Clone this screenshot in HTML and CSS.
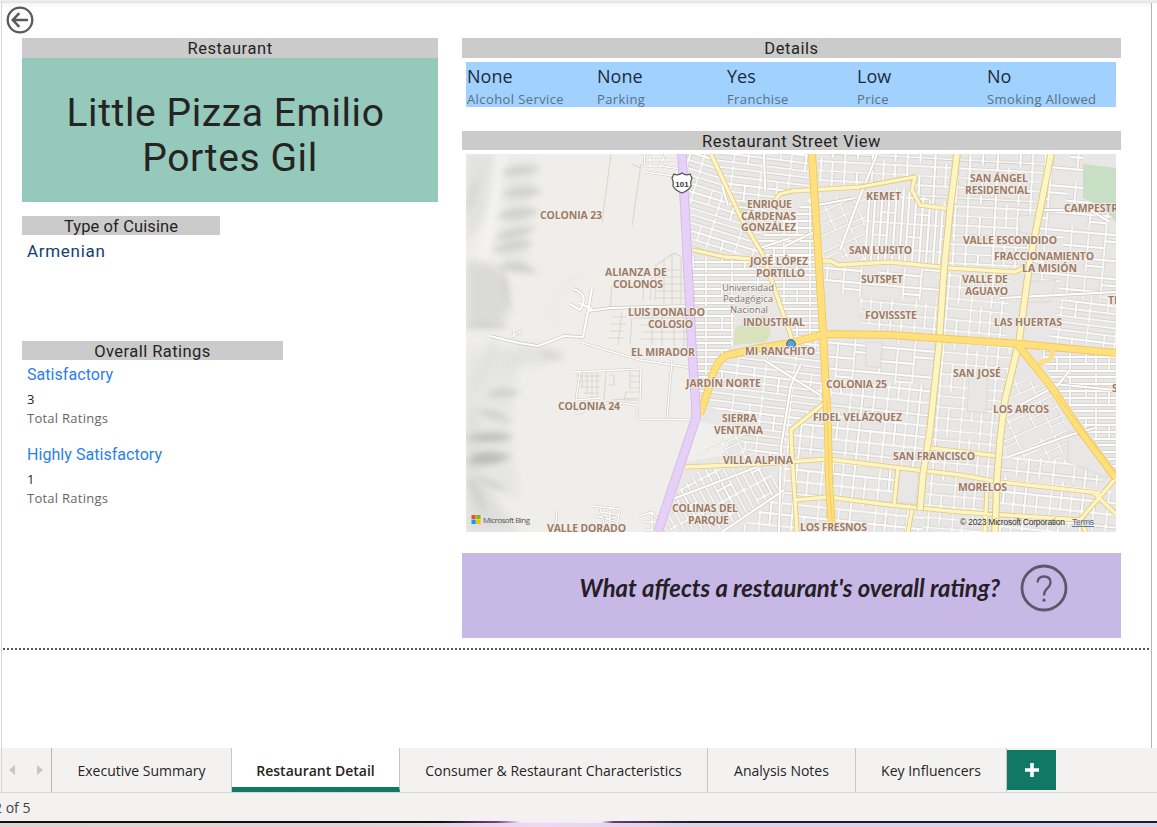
FILE: index.html
```html
<!DOCTYPE html>
<html lang="en">
<head>
<meta charset="utf-8">
<title>Restaurant Detail</title>
<link rel="stylesheet" href="styles.css">
</head>
<body>
<div class="app">
  <div class="ribbon-edge"></div>
  <main class="canvas">
    <button class="back" aria-label="Back">
      <svg width="28" height="28" viewBox="0 0 28 28" fill="none" stroke="#5c5a59" stroke-width="2.3"><circle cx="14" cy="14" r="12.3"/><path d="M22 14H7M13.3 7.2L6.8 14l6.5 6.8" stroke-width="2.5"/></svg>
    </button>
    <div class="report">
      <section class="left">
        <h2 class="bar">Restaurant</h2>
        <div class="name-card"><div class="name-first">Little Pizza Emilio</div><div>Portes Gil</div></div>
        <h2 class="bar bar-cuisine">Type of Cuisine</h2>
        <div class="cuisine">Armenian</div>
        <h2 class="bar bar-ratings">Overall Ratings</h2>
        <div class="rating"><div class="rating-name">Satisfactory</div><div class="rating-value">3</div><div class="rating-label">Total Ratings</div></div>
        <div class="rating"><div class="rating-name">Highly Satisfactory</div><div class="rating-value">1</div><div class="rating-label">Total Ratings</div></div>
      </section>
      <section class="right">
        <h2 class="bar">Details</h2>
        <div class="details">
          <div class="fact"><b>None</b><span>Alcohol Service</span></div>
          <div class="fact"><b>None</b><span>Parking</span></div>
          <div class="fact"><b>Yes</b><span>Franchise</span></div>
          <div class="fact"><b>Low</b><span>Price</span></div>
          <div class="fact"><b>No</b><span>Smoking Allowed</span></div>
        </div>
        <h2 class="bar bar-map">Restaurant Street View</h2>
        <svg class="map" width="650" height="378" viewBox="466 154 650 378">
          <defs>
            <filter id="soft" x="-50%" y="-50%" width="200%" height="200%"><feGaussianBlur stdDeviation="5"/></filter>
            <filter id="soft2" x="-50%" y="-80%" width="200%" height="260%"><feGaussianBlur stdDeviation="3"/></filter>
            <path id="rowsTile" d="M0 3H52M0 10H52M0 17H52M0 24H52M0 31H52M4 0V31M30 3V34M46 10V24M17 17V31"/>
            <path id="gridTile" d="M0 4H50M0 14H50M0 24H50M0 35H50M4 0V40M13 0V24M22 4V40M32 0V40M42 14V40"/>
            <path id="wideTile" d="M0 5H60M0 19H42M0 31H60M8 0V31M25 5V44M42 0V44M42 12H60M25 38H42"/>
            <pattern id="rows" width="52" height="34" patternUnits="userSpaceOnUse"><use href="#rowsTile" class="st-edge"/><use href="#rowsTile" class="st"/></pattern>
            <pattern id="rows20" href="#rows" patternTransform="rotate(17) scale(1.1)"/>
            <pattern id="rows8" href="#rows" patternTransform="rotate(7) scale(1.1)"/>
            <pattern id="rowsTilt" href="#rows" patternTransform="rotate(62) scale(1.15)"/>
            <pattern id="rowsV" href="#rows" patternTransform="rotate(94)"/>
            <pattern id="grid" width="50" height="40" patternUnits="userSpaceOnUse" patternTransform="rotate(5) scale(1.1)"><use href="#gridTile" class="st-edge"/><use href="#gridTile" class="st"/></pattern>
            <pattern id="gridS" href="#grid" patternTransform="rotate(6) scale(1.15)"/>
            <pattern id="gridN" href="#grid" patternTransform="rotate(3) scale(1.25 .95)"/>
            <pattern id="wide" width="60" height="44" patternUnits="userSpaceOnUse" patternTransform="rotate(5)"><use href="#wideTile" class="st-edge"/><use href="#wideTile" class="st"/></pattern>
            <pattern id="wideTilt" href="#wide" patternTransform="rotate(-24) scale(.85)"/>
          </defs>
          <rect x="466" y="154" width="650" height="378" fill="#efeeeb"/>

          <!-- hill shading -->
          <g filter="url(#soft)">
            <path d="M466 154H498L490 210 466 245Z" fill="#e1e1df"/>
            <path d="M505 160H535L525 275 500 262Z M466 350H520L510 430 520 500 466 480Z" fill="#e6e6e4"/>
            <path d="M466 262Q500 255 508 290Q512 318 498 326L466 328Z" fill="#dadad8"/>
            <path d="M484 262L500 154" stroke="#f6f6f5" stroke-width="8"/>
            <path d="M466 395Q485 420 478 460Q490 500 520 532H466Z" fill="#dededc"/>
            <path d="M500 350Q530 340 565 352L545 365Q520 362 500 380Z" fill="#e2e2e0"/>
            <path d="M555 330Q546 296 580 272" stroke="#e9e9e6" stroke-width="5" fill="none"/>
            <path d="M470 390Q500 350 490 344" stroke="#e0e0de" stroke-width="10" fill="none"/>
          </g>
          <g filter="url(#soft2)" fill="#d0d0ce">
            <path d="M504 173Q520 164 537 169Q522 175 504 173Z M505 194Q522 184 539 191Q522 198 505 194Z M500 216Q518 206 536 212Q520 220 500 216Z M497 238Q512 228 532 229Q516 238 497 238Z M494 250Q512 240 530 243Q514 252 494 250Z M500 268Q518 258 534 272Q516 270 500 268Z" stroke="#d0d0ce" stroke-width="3"/>
            <path d="M468 438Q490 430 510 437Q490 444 468 438Z M468 462Q480 446 508 457Q488 468 468 462Z" fill="#bcbcba" stroke="#c4c4c2" stroke-width="3"/>
            <path d="M488 394Q503 386 518 393Q504 399 488 394Z M478 412Q495 408 509 421Q492 418 478 412Z M478 479Q494 479 505 490Q490 486 478 479Z" stroke="#d0d0ce" stroke-width="2"/>
            <path d="M538 353Q552 350 566 358Q550 362 538 353Z" fill="#d6d6d4"/>
            <ellipse cx="477" cy="495" rx="4" ry="20" transform="rotate(-25 477 495)"/><ellipse cx="505" cy="290" rx="2.500" ry="20" transform="rotate(-10 505 290)"/>
            <ellipse cx="472" cy="196" rx="4" ry="18" fill="#d8d8d6" transform="rotate(18 472 196)"/><ellipse cx="486" cy="325" rx="22" ry="3"/>
          </g>

          <!-- urban ground and parks -->
          <path d="M684 154H1116V532H662L697 417Z" fill="#e9e7e5"/>
          <path d="M699 422L738 428 722 456 684 462Z" fill="#f0efec"/>
          <path d="M735 328L765 315 771 333 766 342 733 345Z M739 203L746 202 748 212 742 220Z" fill="#d9e2bd"/>

          <!-- street grids -->
          <g>
            <path fill="url(#rows20)" d="M686 154H711L745 225 765 257 693 248Z"/>
            <path fill="url(#rows8)" d="M713 154H810L815 190 780 192 768 205 760 240 742 215Z"/>
            <path fill="url(#rows)" d="M690 256L766 262 775 290 735 286 733 345 712 370 700 400 694 350Z"/>
            <path fill="url(#rows)" d="M766 262L758 240 815 195 823 333 794 341Z"/>
            <path fill="url(#gridN)" d="M818 154H956L950 208 915 205 912 180 818 190Z"/>
            <path fill="url(#rowsV)" d="M865 193L910 188 948 212 944 264 865 260Z"/>
            <path fill="url(#wideTilt)" d="M818 195H865V260H822Z"/>
            <path fill="url(#wide)" d="M824 266L943 270 942 300 826 296Z"/>
            <path fill="url(#grid)" d="M860 298L942 300 939 336 862 331Z"/>
            <path fill="url(#gridN)" d="M958 154H1050L1032 255 1025 268 946 265Z"/>
            <path fill="url(#grid)" d="M945 272L1010 272 1006 342 940 336Z"/>
            <path fill="url(#wide)" d="M1052 154H1083V198L1103 210 1116 220V300L1026 296 1042 212Z"/>
            <path fill="url(#rows8)" d="M1060 300L1116 296V350L1048 342Z"/>
            <path fill="url(#rows8)" d="M722 362L820 340 824 400 791 430 782 460 745 456 735 415 705 405Z"/>
            <path fill="url(#wideTilt)" d="M738 424L758 462 690 462Z"/>
            <path fill="url(#rowsTilt)" d="M700 469L764 468 782 488 730 528 666 530 676 494Z"/>
            <path fill="url(#gridS)" d="M784 430L828 404 832 532H736L784 490Z"/>
            <path fill="url(#wide)" d="M828 338L937 340 934 385 830 380Z"/>
            <path fill="url(#gridS)" d="M830 380L934 384 922 532H834Z"/>
            <path fill="url(#grid)" d="M940 342L1016 348 995 532H922Z"/>
            <path fill="url(#wideTilt)" d="M1016 375L1050 390 1072 440 1052 470 1000 460 1004 405Z"/>
            <path fill="url(#gridS)" d="M1000 456L1090 462 1116 500V532H998Z"/>
            <path fill="url(#rows)" d="M1040 350L1116 354V470L1054 384Z"/>
          </g>
          <g class="block"><path d="M900 470L918 472 916 504 897 502Z M969 376L988 377 986 413 967 411Z M1068 430L1095 442 1108 478 1068 462Z M1018 216L1036 215 1034 235 1020 232Z M1024 282L1056 280 1050 302 1022 302Z M866 342L882 342 880 368 866 366Z"/></g>
          <path d="M1083 164L1116 168V222L1103 207 1083 198Z" fill="#c9dfc5"/>

          <!-- settlements on the west side -->
          <g class="tan">
            <path d="M611 154L602 222M641 164L632 226M640 168L632 164M610 310L612 286M644 270L643 300M652 276L650 300M622 312L618 345M632 318L630 344"/>
            <path d="M658 264L674 253 688 260M656 264L655 300M656 270H688M657 277H690M656 284H690M656 291H690M656 298H691M664 260V304M672 254V304M681 258V304M612 317H626M610 324H626M610 331H624M608 338H624M634 318H690M640 325H690M644 332H691M640 339H691M652 306V345M662 306V346M674 306V346M684 306V346"/>
            <path d="M576 376H602M578 381H600M580 387H600M584 393H599M590 398H599M582 373V388M587 373V394M592 373V397M597 373V399M606 372L604 400M609 375H614V385H608M630 371V388H640M630 376H640M630 382H640M626 392H640V400H624ZM612 400L637 398"/>
          </g>
          <g class="minor-edge"><use href="#minor"/></g>
          <g class="minor"><g id="minor"><path d="M490 336L519 343 538 346 564 336 583 337 588 311 592 288M592 309L579 303M573 289Q590 294 580 310L570 304M588 311L610 308 690 306"/></g></g>
          <g class="minor-edge thin"><use href="#lanes"/></g>
          <g class="minor thin"><g id="lanes"><path d="M511 337L520 331V337M514 331V339M580 342L606 350 640 360 692 368M580 372L576 400 600 398M574 414L610 402 637 405V419L696 420M574 372L640 369M641 367L640 400M672 360L667 418M644 154L645 166H660L665 154M645 172L682 177M650 154V166M646 160H680M660 166L682 169M555 532L557 510M592 506L620 509 616 530M600 508L606 532M596 516L618 522M602 512L618 515M610 508V528M640 516L652 512 668 532M643 522H660M645 530H664M652 512V530"/></g></g>
          <g class="minor-edge"><use href="#collectors"/></g>
          <g class="minor"><g id="collectors"><path d="M801 364L791 385 781 447 779 532M785 246L814 232M760 248L790 238M877 154L857 204 840 250M818 205L855 198M1000 298L1116 292M1040 210H1090L1110 222M1020 405L1058 385 1070 370M1008 457L1070 435 1095 428M1054 384L1116 390M722 185L728 206M764 154L765 190M764 360L820 395M670 500L760 466M722 532L784 490"/></g></g>

          <!-- avenues -->
          <g class="avenue-edge"><use href="#ave"/></g>
          <g class="avenue"><g id="ave">
            <path d="M711 154L742 220 763 255 775 290 793 342M770 207L780 194 792 191 860 187 915 177 912 190 920 205 950 209M693 250L725 257 765 260M820 261H831L838 265 890 262 950 268 1015 272 1030 265M685 467L760 464 828 459 892 467 960 475 1000 482 1100 493M795 500L828 497 890 505 960 512 1080 520 1116 478M828 400L791 430 792 455 795 500 797 532M898 468L894 505M930 448L998 456M987 490L985 532M912 510L908 532M1093 492L1116 514M1080 520L1086 532"/>
          </g></g>
          <g class="avenue-edge big"><use href="#ave2"/></g>
          <g class="avenue big"><g id="ave2"><path d="M957 154L950 210 944 270 939 345 930 430 923 475 920 510M1051 154L1042 200 1030 260 1019 342 1005 400 1000 440 997 480 995 532"/></g></g>
          <g class="arterial-edge"><use href="#art"/></g>
          <g class="arterial"><g id="art"><path d="M812 154L823 332 828 430 829 480 832 532M700 414L710 385Q715 360 728 355L760 348 791 343 824 334 890 335 1020 344 1116 353M1017 344L1050 385 1080 430 1116 478"/><path d="M1039 365Q1042 361 1048 360Q1053 358 1053 350" stroke-width="4"/></g></g>
          <path d="M827 400L829 480 833 532M1056 394L1116 474" stroke="#f5cf62" stroke-width="1" fill="none"/>
          <path class="freeway-edge" d="M682 154L687 250 692 350 696 407V418L670 495 658 532"/>
          <path class="freeway" d="M682 154L687 250 692 350 696 407V418L670 495 658 532"/>
          <path d="M674 174Q678 176 682 173Q686 176 690 174L692 178Q690 182 691 186Q688 191 682 193Q676 191 673 186Q674 182 672 178Z" fill="#fff" stroke="#555" stroke-width="1.300"/>
          <text x="682" y="186.500" class="shield" text-anchor="middle">101</text>
          <circle cx="791" cy="344" r="4.300" fill="#54a5e5" stroke="#285b88" stroke-width="1"/>

          <g class="labels">
            <text x="540" y="219" textLength="62">COLONIA 23</text>
            <text x="747" y="208" textLength="45">ENRIQUE</text><text x="741" y="219.500" textLength="55">CÁRDENAS</text><text x="741" y="231" textLength="55">GONZÁLEZ</text>
            <text x="866" y="200" textLength="35">KEMET</text>
            <text x="970" y="182" textLength="58">SAN ÁNGEL</text><text x="965" y="194" textLength="65">RESIDENCIAL</text>
            <text x="1064" y="212" textLength="60">CAMPESTRE</text>
            <text x="605" y="276" textLength="62">ALIANZA DE</text><text x="613" y="287.500" textLength="50">COLONOS</text>
            <text x="750" y="265" textLength="58">JOSÉ LÓPEZ</text><text x="756" y="277" textLength="49">PORTILLO</text>
            <text x="849" y="254" textLength="63">SAN LUISITO</text>
            <text x="963" y="244" textLength="94">VALLE ESCONDIDO</text>
            <text x="994" y="260" textLength="100">FRACCIONAMIENTO</text><text x="1022" y="272" textLength="55">LA MISIÓN</text>
            <text x="861" y="283" textLength="42">SUTSPET</text>
            <text x="962" y="283" textLength="46">VALLE DE</text><text x="965" y="295" textLength="43">AGUAYO</text>
            <text x="1108" y="304">TH</text>
            <g class="place"><text x="722" y="291" textLength="52">Universidad</text><text x="723" y="302" textLength="50">Pedagógica</text><text x="730" y="313" textLength="38">Nacional</text></g>
            <text x="628" y="316" textLength="77">LUIS DONALDO</text><text x="648" y="327.500" textLength="45">COLOSIO</text>
            <text x="743" y="326" textLength="62">INDUSTRIAL</text>
            <text x="865" y="319" textLength="52">FOVISSSTE</text>
            <text x="994" y="326" textLength="68">LAS HUERTAS</text>
            <text x="631" y="356" textLength="64">EL MIRADOR</text>
            <text x="745" y="354.500" textLength="70">MI RANCHITO</text>
            <text x="686" y="387" textLength="75">JARDÍN NORTE</text>
            <text x="826" y="388" textLength="61">COLONIA 25</text>
            <text x="953" y="377" textLength="48">SAN JOSÉ</text>
            <text x="1112" y="392">S</text>
            <text x="558" y="410" textLength="62">COLONIA 24</text>
            <text x="813" y="420.500" textLength="89">FIDEL VELÁZQUEZ</text>
            <text x="993" y="413" textLength="56">LOS ARCOS</text>
            <text x="722" y="422" textLength="35">SIERRA</text><text x="714" y="433.500" textLength="49">VENTANA</text>
            <text x="723" y="464" textLength="70">VILLA ALPINA</text>
            <text x="893" y="460" textLength="82">SAN FRANCISCO</text>
            <text x="958" y="491" textLength="49">MORELOS</text>
            <text x="672" y="512" textLength="66">COLINAS DEL</text><text x="688" y="523.500" textLength="41">PARQUE</text>
            <text x="547" y="532" textLength="79">VALLE DORADO</text>
            <text x="800" y="530.500" textLength="67">LOS FRESNOS</text>
          </g>
          <path d="M471.500 515h4.200v4.200h-4.200z" fill="#f25022"/><path d="M476.300 515h4.200v4.200h-4.200z" fill="#7fba00"/><path d="M471.500 519.800h4.200v4.200h-4.200z" fill="#00a4ef"/><path d="M476.300 519.800h4.200v4.200h-4.200z" fill="#ffb900"/>
          <text class="bing" x="483" y="523" textLength="47">Microsoft Bing</text>
          <text class="copy" x="960" y="525" textLength="105">© 2023 Microsoft Corporation</text>
          <text class="copy terms" x="1072" y="525" textLength="22">Terms</text>
        </svg>
        <div class="question">
          <span>What affects a restaurant's overall rating?</span>
          <svg width="48" height="48" viewBox="0 0 48 48" fill="none" stroke="#5f5669" stroke-width="2.800"><circle cx="24" cy="24" r="22"/><path d="M17.500 18.500Q18 12.500 24 12.500Q30.500 12.500 30.500 18.300Q30.500 21.500 27 24.700Q24 27.500 24 31.500" stroke-width="2.300"/><circle cx="24" cy="36.200" r="1.600" fill="#5f5669" stroke="none"/></svg>
        </div>
      </section>
    </div>
    <div class="page-end"></div>
  </main>
  <nav class="tabs">
    <div class="arrows"><svg width="50" height="44" viewBox="0 0 50 44" fill="#c8c6c4"><path d="M13 17v10l-6-5zM35 17v10l6-5z"/></svg></div>
    <div class="tab t1">Executive Summary</div>
    <div class="tab t2 active">Restaurant Detail</div>
    <div class="tab t3">Consumer &amp; Restaurant Characteristics</div>
    <div class="tab t4">Analysis Notes</div>
    <div class="tab t5">Key Influencers</div>
    <button class="add" aria-label="New page"><svg width="14" height="14" viewBox="0 0 14 14"><path d="M7 0v14M0 7h14" stroke="#fff" stroke-width="3.600"/></svg></button>
  </nav>
  <footer class="status"><span>2 of 5</span></footer>
  <div class="desktop-edge"></div>
</div>
</body>
</html>
```
FILE: styles.css
```css
* { box-sizing: border-box; }
body { margin: 0; background: #fff; font-family: "Open Sans", "Noto Sans", sans-serif; color: #252423; }
button { border: 0; padding: 0; background: none; display: block; }
h2 { margin: 0; font-weight: 400; }
.app { width: 1157px; height: 827px; overflow: hidden; display: flex; flex-direction: column; }
.ribbon-edge { height: 3px; background: linear-gradient(#f1f0ef, #e2e2e2); flex: none; }
.canvas { height: 745px; margin-left: 1px; width: 1151px; border-left: 1px solid #d6d6d6; border-right: 1px solid #b5b5b5; flex: none; background: linear-gradient(#f4f4f4, #fff 5px); }
.back { margin: 3px 0 0 4px; height: 28px; }
.report { display: flex; gap: 24px; padding: 4px 0 0 20px; height: 614px; }
.left { width: 416px; }
.right { width: 659px; }
.bar { height: 20px; background: #cbcbcb; text-align: center; font: 400 16.500px/21px Roboto, sans-serif; letter-spacing: .55px; }
.name-card { height: 144px; background: #95c9bb; padding-top: 33px; text-align: center; font: 400 39px/45px Roboto, sans-serif; letter-spacing: .6px; }
.name-first { padding-right: 9px; }
.bar-cuisine { width: 198px; height: 19px; margin-top: 14px; letter-spacing: .1px; }
.cuisine { margin: 6px 0 0 5px; height: 20px; color: #12406f; font: 400 17px/20px Roboto, sans-serif; letter-spacing: .7px; }
.bar-ratings { width: 261px; height: 19px; margin-top: 80px; letter-spacing: .45px; }
.rating { height: 80px; padding: 5px 0 0 5px; }
.rating-name { color: #2a80ea; font: 400 16px/19px Roboto, sans-serif; letter-spacing: .05px; height: 20px; }
.rating-value { font-size: 13px; line-height: 20px; margin-top: 4px; }
.rating-label { font-size: 13px; line-height: 18px; color: #666; letter-spacing: .25px; }
.details { display: grid; grid-template-columns: repeat(5, 130px); margin: 4px 0 0 4px; width: 650px; height: 45px; background: #a0d1ff; }
.fact { padding-left: 1px; }
.fact b { display: block; font-weight: 400; font-size: 18px; line-height: 28px; height: 28px; color: #1c2b38; }
.fact span { display: block; font-size: 13px; line-height: 18px; color: #5c7082; letter-spacing: .4px; white-space: nowrap; }
.bar-map { height: 19px; margin-top: 24px; }
.map { display: block; margin: 4px 0 0 4px; }
.question { margin-top: 21px; height: 85px; background: #c8b8e6; display: flex; align-items: flex-start; justify-content: flex-end; gap: 20px; padding: 11px 53px 0 0; }
.question span { font: italic 700 23.900px/48px Lato, sans-serif; white-space: nowrap; color: #242026; }
.page-end { margin: 0 1px; height: 2px; background: repeating-linear-gradient(90deg, #555 0 2px, #fff 2px 4px); }

.st, .st-edge { fill: none; }
.st-edge { stroke: #cbc7bf; stroke-width: 2.900; }
.st { stroke: #fdfdfc; stroke-width: 1.800; }
.block { fill: #e9e7e5; stroke: #d6d2ca; stroke-width: .6; }
.minor-edge, .minor, .tan, .avenue, .avenue-edge, .arterial, .arterial-edge, .freeway, .freeway-edge { fill: none; stroke-linejoin: round; }
.minor-edge { stroke: #cdc7bb; stroke-width: 3.400; }
.minor { stroke: #fff; stroke-width: 2.200; }
.minor-edge.thin { stroke-width: 2.600; }
.minor.thin { stroke-width: 1.400; }
.tan { stroke: #dbd7cc; stroke-width: 1.100; }
.avenue-edge { stroke: #e0cb7c; stroke-width: 5; }
.avenue { stroke: #fff5c4; stroke-width: 3.300; }
.avenue-edge.big { stroke-width: 7.500; }
.avenue.big { stroke-width: 5.500; }
.arterial-edge { stroke: #efc961; stroke-width: 8; }
.arterial { stroke: #ffe07c; stroke-width: 6.200; }
.freeway-edge { stroke: #d2b9e6; stroke-width: 9.500; }
.freeway { stroke: #e6d0f8; stroke-width: 7.800; }
.shield { font: 700 8px "Liberation Sans", sans-serif; fill: #333; }
.labels { font: 700 10.500px "Open Sans", sans-serif; fill: #9e7b65; stroke: #f3f0ed; stroke-width: 1.600; paint-order: stroke; stroke-linejoin: round; }
.labels .place { font-weight: 400; font-size: 9.500px; fill: #80706c; }
.bing { font: 8px "Open Sans", sans-serif; fill: #555; }
.copy { font: 8.500px "Liberation Sans", sans-serif; fill: #333; }
.terms { fill: #4b5f9b; text-decoration: underline; }

.tabs { display: flex; height: 45px; background: #f3f2f1; border-bottom: 1px solid #d9d8d7; flex: none; }
.arrows { width: 51px; margin-left: 1px; border-left: 1px solid #d6d6d6; border-right: 1px solid #b9b8b6; }
.tab { border-right: 1px solid #c8c6c4; height: 44px; text-align: center; font-size: 14px; line-height: 45px; white-space: nowrap; }
.t1 { width: 180px; }
.t2 { width: 168px; }
.t3 { width: 308px; }
.t4 { width: 148px; }
.t5 { width: 151px; }
.active { background: #fff; font-weight: 600; border-bottom: 5px solid #117865; }
.add { width: 49px; height: 40px; margin-top: 2px; background: #117865; display: flex; align-items: center; justify-content: center; }
.status { height: 28px; background: #f3f2f1; font-size: 14px; line-height: 29px; color: #444; flex: none; overflow: hidden; }
.status span { margin-left: -6px; }
.desktop-edge { height: 6px; border-top: 2px solid #151518; border-image: linear-gradient(90deg, #111 0 38%, #7b3f86 43%, #f5eaf8 45% 52%, #6b3b75 53%, #1e1c2c 60%) 1; background: linear-gradient(90deg, #dcd5d2, #e2d5dc 35%, #f0d8f2 47%, #dcd5e4 58%, #d6d8ea); }
```
